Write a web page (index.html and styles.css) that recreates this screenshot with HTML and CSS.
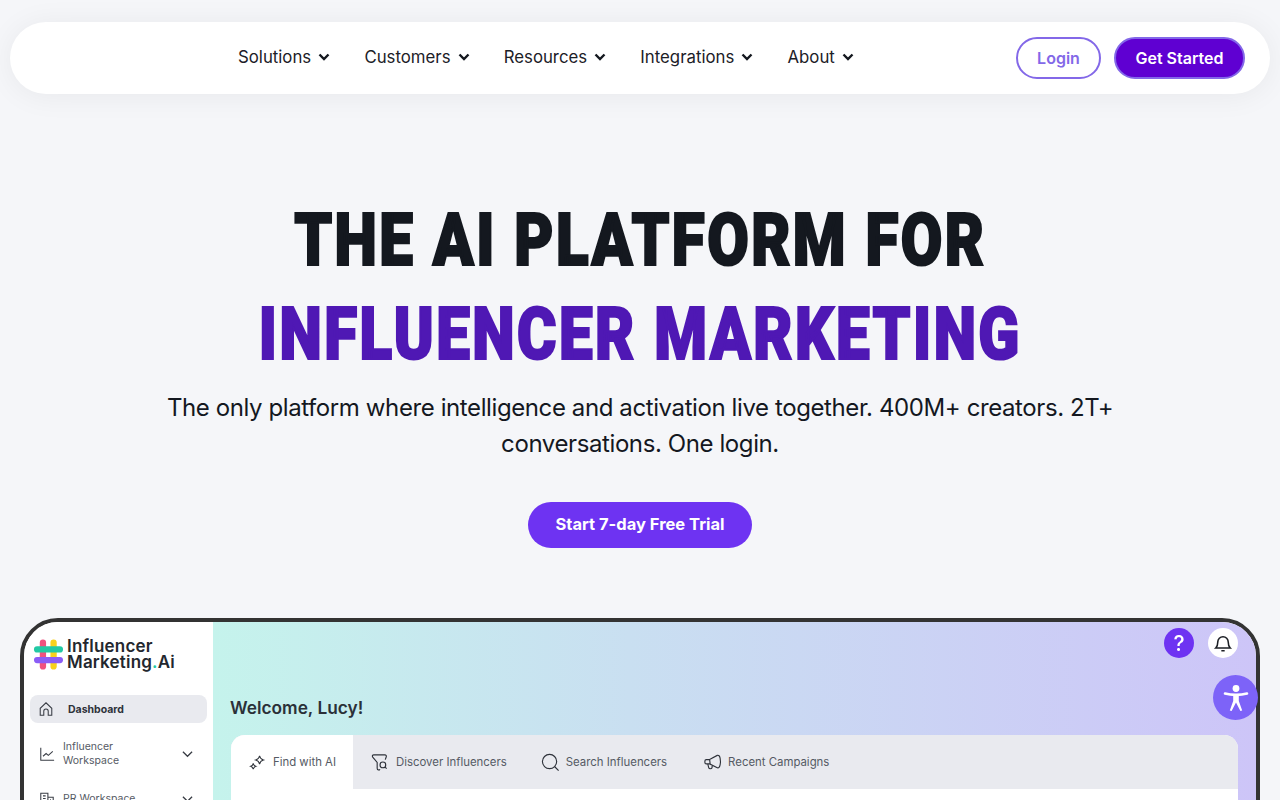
FILE: index.html
```html
<!DOCTYPE html>
<html lang="en">
<head>
    <meta charset="UTF-8">
    <meta name="viewport" content="width=device-width, initial-scale=1.0">
    <title>Influencer Marketing AI</title>
    <link rel="stylesheet" href="styles.css">
</head>
<body>

    <nav class="navbar">
        <ul class="nav-links">
            <li>Solutions <svg class="caret" viewBox="0 0 12 8"><path d="M1.5 1.5 6 6l4.5-4.5"/></svg></li>
            <li>Customers <svg class="caret" viewBox="0 0 12 8"><path d="M1.5 1.5 6 6l4.5-4.5"/></svg></li>
            <li>Resources <svg class="caret" viewBox="0 0 12 8"><path d="M1.5 1.5 6 6l4.5-4.5"/></svg></li>
            <li>Integrations <svg class="caret" viewBox="0 0 12 8"><path d="M1.5 1.5 6 6l4.5-4.5"/></svg></li>
            <li>About <svg class="caret" viewBox="0 0 12 8"><path d="M1.5 1.5 6 6l4.5-4.5"/></svg></li>
        </ul>
        <div class="nav-buttons">
            <a class="btn-login">Login</a>
            <a class="btn-started">Get Started</a>
        </div>
    </nav>

    <section class="hero">
        <h1>THE AI PLATFORM FOR<br><span class="purple">INFLUENCER MARKETING</span></h1>
        <p class="subtitle">The only platform where intelligence and activation live together. 400M+ creators. 2T+ conversations. One login.</p>
        <a class="btn-trial">Start 7-day Free Trial</a>
    </section>

    <div class="app-frame">
        <aside class="sidebar">
            <div class="logo">
                <svg class="logo-mark" viewBox="0 0 32 32">
                    <rect x="7" y="1" width="6.5" height="31" rx="3.2" fill="#f0527f"/>
                    <rect x="18" y="1" width="6.5" height="31" rx="3.2" fill="#f8d11c"/>
                    <rect x="1" y="8" width="30" height="6.5" rx="3.2" fill="#22c9a4"/>
                    <rect x="1" y="19" width="30" height="6.5" rx="3.2" fill="#8b5cf6"/>
                </svg>
                <div class="logo-text">Influencer<br>Marketing<span class="dot">.</span>Ai</div>
            </div>
            <div class="side-item active">
                <svg class="side-icon" viewBox="0 0 18 18"><path d="M2.5 16V8.2L9 2l6.5 6.2V16h-4v-4.5a2.5 2.5 0 0 0-5 0V16z"/></svg>
                <span>Dashboard</span>
            </div>
            <div class="side-item">
                <svg class="side-icon" viewBox="0 0 18 18"><path d="M2 2v14h15M4.500 11.500l3.500-3 2.500 2 5-4.500"/></svg>
                <span class="side-label">Influencer<br>Workspace</span>
                <svg class="side-caret" viewBox="0 0 12 8"><path d="M1 1.500 6 6.500l5-5"/></svg>
            </div>
            <div class="side-item">
                <svg class="side-icon" viewBox="0 0 18 18"><path d="M2 16V2.500h8V16zM10 7h6v9h-6M4.500 5.500h3M4.500 8.500h3M4.500 11.500h3M12.500 10h1M12.500 13h1"/></svg>
                <span class="side-label">PR Workspace</span>
                <svg class="side-caret" viewBox="0 0 12 8"><path d="M1 1.500 6 6.500l5-5"/></svg>
            </div>
        </aside>
        <main class="app-main">
            <div class="top-icons">
                <span class="icon-help">?</span>
                <span class="icon-bell">
                    <svg viewBox="0 0 18 18"><path d="M2.500 13.500c1.500-1.500 1.800-3 1.800-5.500a4.700 4.700 0 0 1 9.400 0c0 2.500.3 4 1.800 5.500zM7.500 16h3"/></svg>
                </span>
            </div>
            <h2>Welcome, Lucy!</h2>
            <div class="tab-card">
                <div class="tabs">
                    <div class="tab active">
                        <svg viewBox="0 0 20 20"><path d="M12.500 2c.6 3 1.900 4.300 4.500 5-2.600.7-3.900 2-4.500 5-.6-3-1.900-4.300-4.500-5 2.600-.7 3.900-2 4.500-5zM5 11c.4 2 1.300 3 3 3.500-1.700.5-2.600 1.500-3 3.500-.4-2-1.300-3-3-3.500 1.700-.5 2.600-1.500 3-3.500z"/></svg>
                        Find with AI
                    </div>
                    <div class="tab">
                        <svg viewBox="0 0 20 20"><path d="M3 2h11.500c1.500 0 2 1 1.500 2.200L15 7M3 2c-1.500 0-2 1.200-1.200 2.400L6.500 10v6c0 1.800 2 2.500 3 1.200"/><circle cx="12.500" cy="12.500" r="3"/><path d="m14.800 14.800 1.700 1.700"/></svg>
                        Discover Influencers
                    </div>
                    <div class="tab">
                        <svg viewBox="0 0 20 20"><circle cx="9" cy="9" r="7.500"/><path d="m14.500 14.500 4 4"/></svg>
                        Search Influencers
                    </div>
                    <div class="tab">
                        <svg viewBox="0 0 20 20"><path d="M2 8.500c0-1 .5-1.500 1.500-1.500h3L15 2.500c1.500-.5 2.500.5 3 3 .5 2.500.5 5 0 7-.5 2.500-1.500 3.500-3 3L7 11.500H3.500C2.500 11.500 2 11 2 10zM7 7l.5 4.500M5 11.500l1 4c.3 1.500 3 1.500 3.500 0l.2-2.500"/></svg>
                        Recent Campaigns
                    </div>
                </div>
            </div>
        </main>
    </div>

    <button class="a11y-btn" aria-label="Accessibility">
        <svg viewBox="0 0 32 32">
            <circle cx="16" cy="6.500" r="3.400"/>
            <path d="M5 11.500c3.500 1 7 1.400 11 1.400s7.500-.4 11-1.400"/>
            <path d="M13.200 13.500h5.600v5.500l3.400 9.500-1.800.6L16 20.500l-4.400 8.600-1.800-.6 3.400-9.500z"/>
        </svg>
    </button>

</body>
</html>
```

FILE: styles.css
```css
html, body {
    height: 800px;
    overflow: hidden;
}
body {
    font-family: Inter, "Noto Sans", sans-serif;
    background-color: #f5f6f9;
    color: #14181f;
    margin: 0;
    padding: 22px 10px 0;
    box-sizing: border-box;
    position: relative;
}
.navbar {
    display: flex;
    align-items: center;
    justify-content: space-between;
    height: 72px;
    padding: 0 25px 0 228px;
    background-color: #fff;
    border-radius: 36px;
    box-shadow: 0 2px 30px rgba(0, 0, 0, 0.06);
}
.nav-links {
    display: flex;
    gap: 34.200px;
    list-style: none;
    margin: 0;
    padding: 0 0 2px;
}
.nav-links li {
    display: flex;
    align-items: center;
    gap: 7px;
    font-size: 16.800px;
    white-space: nowrap;
    color: #1c2027;
}
.caret {
    width: 12px;
    height: 8px;
    fill: none;
    stroke: #14181f;
    stroke-width: 2.400;
}
.nav-buttons {
    display: flex;
    gap: 13px;
}
.nav-buttons a {
    display: flex;
    align-items: center;
    justify-content: center;
    box-sizing: border-box;
    height: 42px;
    padding-bottom: 1px;
    border-radius: 21px;
    border: 2px solid #8368e8;
    font-size: 16px;
    font-weight: 600;
    white-space: nowrap;
}
.btn-login {
    width: 85px;
    color: #8368e8;
    background-color: #fff;
}
.btn-started {
    width: 131px;
    color: #fff;
    background-color: #5f00d2;
}
.hero {
    display: flex;
    flex-direction: column;
    align-items: center;
    text-align: center;
    padding-top: 100px;
}
.hero h1 {
    font-family: Roboto, "Liberation Sans", sans-serif;
    font-size: 72px;
    font-weight: 900;
    line-height: 94px;
    letter-spacing: 2.900px;
    white-space: nowrap;
    margin: 0;
    color: #14181f;
    -webkit-text-stroke: 2.200px currentColor;
    transform: scaleX(0.836);
}
.purple {
    color: #4f18b4;
}
.subtitle {
    max-width: 960px;
    margin: 8px 0 0;
    font-size: 24px;
    letter-spacing: -0.400px;
    line-height: 36px;
}
.btn-trial {
    display: flex;
    align-items: center;
    justify-content: center;
    width: 224px;
    height: 46px;
    margin-top: 40px;
    padding-bottom: 2px;
    box-sizing: border-box;
    border-radius: 23px;
    background-color: #6e33f2;
    color: #fff;
    font-size: 16.500px;
    font-weight: 700;
}
.app-frame {
    display: flex;
    box-sizing: border-box;
    width: 1240px;
    height: 600px;
    margin: 70px 0 0 10px;
    border: 4px solid #333;
    border-radius: 38px;
    background-color: #fff;
    overflow: hidden;
    filter: blur(0.500px);
}
.sidebar {
    flex: 0 0 189px;
    box-sizing: border-box;
    padding: 14px 6px 0;
    background-color: #fff;
}
.logo {
    display: flex;
    align-items: center;
    gap: 3px;
    padding-left: 3px;
    height: 36px;
}
.logo-mark {
    width: 31px;
    height: 32px;
}
.logo-text {
    font-size: 17px;
    font-weight: 600;
    letter-spacing: 0.200px;
    line-height: 16px;
    color: #23272e;
}
.dot {
    color: #22c9a4;
}
.side-item {
    display: flex;
    align-items: center;
    gap: 8px;
    padding: 0 14px 0 9px;
    height: 28px;
    margin-top: 17px;
    font-size: 10.500px;
    color: #555a64;
}
.side-item.active {
    gap: 14px;
    padding-left: 8px;
    margin-top: 23px;
    border-radius: 8px;
    background-color: #e9eaef;
    font-weight: 700;
    color: #2e323a;
}
.side-icon {
    flex: none;
    width: 16px;
    height: 16px;
    fill: none;
    stroke: #3a3e46;
    stroke-width: 1.200;
}
.side-label {
    flex: 1;
    line-height: 14px;
    white-space: nowrap;
}
.side-caret {
    flex: none;
    width: 11px;
    height: 8px;
    fill: none;
    stroke: #3a3e46;
    stroke-width: 1.400;
}
.app-main {
    flex: 1;
    box-sizing: border-box;
    padding: 6px 18px 0 17px;
    background: linear-gradient(90deg, #c5f3ec 0%, #c9dff1 40%, #cdc5f8 100%);
}
.top-icons {
    display: flex;
    justify-content: flex-end;
    gap: 14px;
}
.icon-help,
.icon-bell {
    display: flex;
    align-items: center;
    justify-content: center;
    width: 30px;
    height: 30px;
    border-radius: 50%;
}
.icon-help {
    background-color: #6e33f2;
    color: #fff;
    font-size: 21px;
    font-weight: 500;
}
.icon-bell {
    background-color: #fff;
}
.icon-bell svg {
    width: 20px;
    height: 20px;
    fill: none;
    stroke: #1c1f25;
    stroke-width: 1.400;
}
.app-main h2 {
    margin: 38px 0 15px;
    font-size: 17.300px;
    line-height: 24px;
    font-weight: 600;
    color: #2b3038;
}
.tab-card {
    background-color: #fff;
    border-radius: 14px 14px 0 0;
    height: 300px;
    overflow: hidden;
    margin-left: 1px;
}
.tabs {
    display: flex;
    height: 54px;
    background-color: #e9eaef;
}
.tab {
    display: flex;
    align-items: center;
    gap: 6px;
    padding: 0 17px;
    font-size: 11.400px;
    white-space: nowrap;
    color: #555a64;
}
.tab.active {
    gap: 7px;
    background-color: #fff;
    width: 122px;
    margin-right: 1px;
    padding-left: 18px;
    box-sizing: border-box;
}
.tab:last-child {
    padding-left: 19px;
}
.tab svg {
    width: 19px;
    height: 19px;
    fill: none;
    stroke: #2e323a;
    stroke-width: 1.200;
}
.a11y-btn {
    position: absolute;
    left: 1213px;
    top: 675px;
    width: 45px;
    height: 45px;
    padding: 0;
    border: none;
    border-radius: 50%;
    background-color: #7d63f8;
}
.a11y-btn svg {
    display: block;
    width: 32px;
    height: 32px;
    margin: auto;
    fill: #fff;
}
.a11y-btn path:first-of-type {
    fill: none;
    stroke: #fff;
    stroke-width: 2.600;
    stroke-linecap: round;
}
```
